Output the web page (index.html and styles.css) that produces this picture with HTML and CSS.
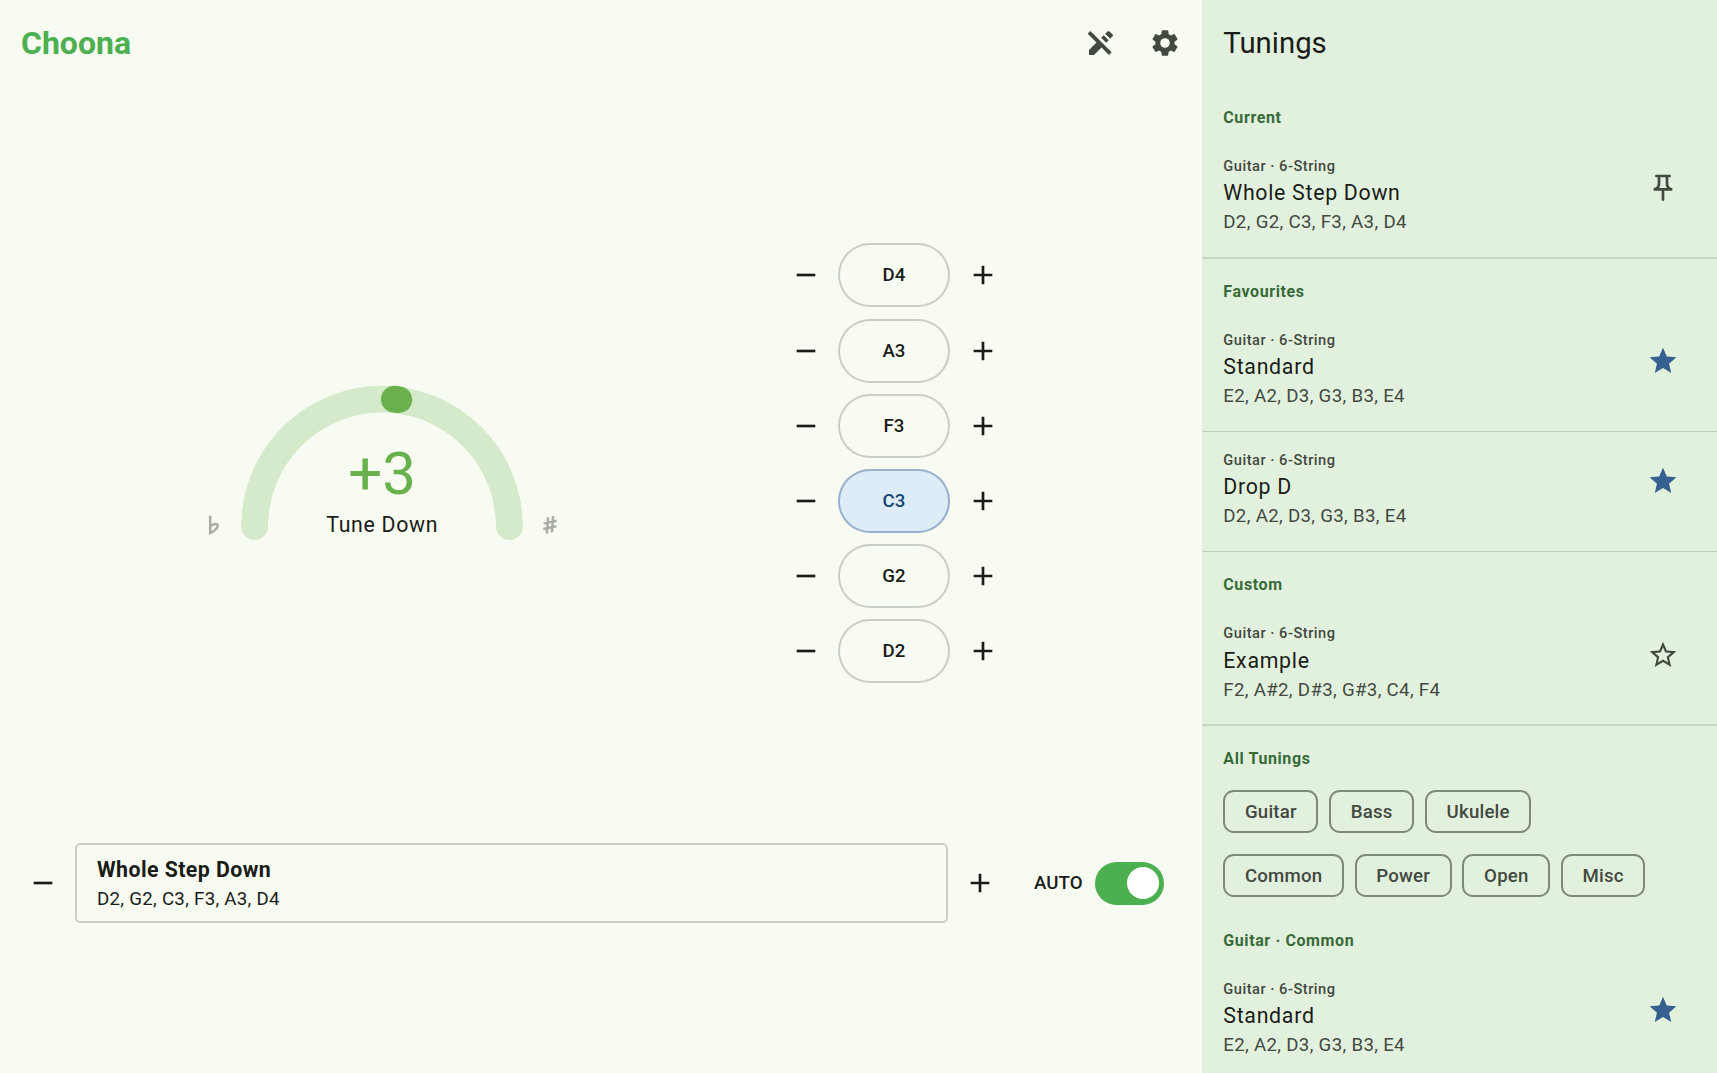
FILE: index.html
```html
<!DOCTYPE html>
<html lang="en">
<head>
<meta charset="utf-8">
<title>Choona</title>
<link rel="stylesheet" href="styles.css">
</head>
<body>
<svg class="defs" aria-hidden="true">
  <symbol id="minus" viewBox="0 0 24 24"><path d="M19 13H5v-2h14v2z"/></symbol>
  <symbol id="plus" viewBox="0 0 24 24"><path d="M19 13h-6v6h-2v-6H5v-2h6V5h2v6h6v2z"/></symbol>
  <symbol id="star" viewBox="0 0 24 24"><path d="M12 17.27 18.18 21l-1.64-7.03L22 9.24l-7.19-.61L12 2 9.19 8.63 2 9.24l5.46 4.73L5.82 21z"/></symbol>
  <symbol id="star-outline" viewBox="0 0 24 24"><path d="m22 9.24-7.19-.62L12 2 9.19 8.63 2 9.24l5.46 4.73L5.82 21 12 17.27 18.18 21l-1.63-7.03L22 9.24zM12 15.4l-3.76 2.27 1-4.28-3.32-2.88 4.38-.38L12 6.1l1.71 4.04 4.38.38-3.32 2.88 1 4.28L12 15.4z"/></symbol>
  <symbol id="pin" viewBox="0 0 24 24"><path d="M14 4v5c0 1.12.37 2.16 1 3H9c.65-.86 1-1.9 1-3V4h4m3-2H7c-.55 0-1 .45-1 1s.45 1 1 1h1v5c0 1.66-1.34 3-3 3v2h5.97v7l1 1 1-1v-7H19v-2c-1.66 0-3-1.34-3-3V4h1c.55 0 1-.45 1-1s-.45-1-1-1z"/></symbol>
</svg>
<div class="app">
  <main class="tuner">
    <header class="topbar">
      <h1 class="brand">Choona</h1>
      <button class="icon-button" aria-label="Edit"><svg class="icon" viewBox="0 0 24 24"><path d="m12.13 8.13 1.93-1.94 3.75 3.75-1.94 1.93zM20.71 5.63l-2.34-2.34a1 1 0 0 0-1.41 0l-1.83 1.83 3.75 3.75L20.71 7a1 1 0 0 0 0-1.37zM2 5l6.63 6.63L3 17.25V21h3.75l5.63-5.62L18 21l2-2L4 3 2 5z"/></svg></button>
      <button class="icon-button" aria-label="Settings"><svg class="icon" viewBox="0 0 24 24"><path d="M19.14 12.94c.04-.3.06-.61.06-.94 0-.32-.02-.64-.07-.94l2.03-1.58a.49.49 0 0 0 .12-.61l-1.92-3.32a.49.49 0 0 0-.59-.22l-2.39.96c-.5-.38-1.03-.7-1.62-.94l-.36-2.54a.48.48 0 0 0-.48-.41h-3.84a.47.47 0 0 0-.47.41l-.36 2.54c-.59.24-1.13.57-1.62.94l-2.39-.96a.48.48 0 0 0-.59.22L2.74 8.87c-.12.21-.08.47.12.61l2.03 1.58c-.05.3-.09.63-.09.94s.02.64.07.94l-2.03 1.58a.49.49 0 0 0-.12.61l1.92 3.32c.12.22.37.29.59.22l2.39-.96c.5.38 1.03.7 1.62.94l.36 2.54c.05.24.24.41.48.41h3.84c.24 0 .44-.17.47-.41l.36-2.54c.59-.24 1.13-.56 1.62-.94l2.39.96c.22.08.47 0 .59-.22l1.92-3.32a.47.47 0 0 0-.12-.61l-2.01-1.58zM12 15.6A3.6 3.6 0 1 1 12 8.4a3.6 3.6 0 0 1 0 7.2z"/></svg></button>
    </header>

    <section class="stage">
      <div class="gauge">
        <div class="accidental"><svg viewBox="0 0 14 20" aria-label="Flat"><path d="M3.2 .8V18C7 16.4 11 13.2 10.7 10.6 10.4 8.2 6.4 8.6 3.4 11.4"/></svg></div>
        <div class="dial">
          <svg class="dial-arc" viewBox="0 0 282 156">
            <path class="track" d="M13.6 141.6A127.4 127.4 0 0 1 268.4 141.6"/>
            <path class="marker" d="M153.3 14.2A127.4 127.4 0 0 1 157.8 14.7"/>
          </svg>
          <div class="reading">
            <span class="offset">+3</span>
            <span class="advice">Tune Down</span>
          </div>
        </div>
        <div class="accidental"><svg viewBox="0 0 14 20" aria-label="Sharp"><path d="M3.9 18.6 5.1 2.4M8.9 17.4 10.1 1.2M.6 8.6 13.6 5.8M.3 14 13.3 11.2"/></svg></div>
      </div>

      <div class="strings">
        <div class="string"><button class="step"><svg class="icon"><use href="#minus"/></svg></button><button class="note">D4</button><button class="step"><svg class="icon"><use href="#plus"/></svg></button></div>
        <div class="string"><button class="step"><svg class="icon"><use href="#minus"/></svg></button><button class="note">A3</button><button class="step"><svg class="icon"><use href="#plus"/></svg></button></div>
        <div class="string"><button class="step"><svg class="icon"><use href="#minus"/></svg></button><button class="note">F3</button><button class="step"><svg class="icon"><use href="#plus"/></svg></button></div>
        <div class="string"><button class="step"><svg class="icon"><use href="#minus"/></svg></button><button class="note note-selected">C3</button><button class="step"><svg class="icon"><use href="#plus"/></svg></button></div>
        <div class="string"><button class="step"><svg class="icon"><use href="#minus"/></svg></button><button class="note">G2</button><button class="step"><svg class="icon"><use href="#plus"/></svg></button></div>
        <div class="string"><button class="step"><svg class="icon"><use href="#minus"/></svg></button><button class="note">D2</button><button class="step"><svg class="icon"><use href="#plus"/></svg></button></div>
      </div>
    </section>

    <footer class="controls">
      <button class="step"><svg class="icon"><use href="#minus"/></svg></button>
      <div class="selector">
        <span class="selector-name">Whole Step Down</span>
        <span class="selector-notes">D2, G2, C3, F3, A3, D4</span>
      </div>
      <button class="step"><svg class="icon"><use href="#plus"/></svg></button>
      <span class="auto">AUTO</span>
      <div class="switch"><div class="thumb"></div></div>
    </footer>
  </main>

  <aside class="panel">
    <h2 class="panel-title">Tunings</h2>

    <h3 class="group">Current</h3>
    <div class="item item-end">
      <div class="item-text"><span class="kind">Guitar · 6-String</span><span class="name">Whole Step Down</span><span class="notes">D2, G2, C3, F3, A3, D4</span></div>
      <button class="icon-button"><svg class="icon"><use href="#pin"/></svg></button>
    </div>

    <h3 class="group">Favourites</h3>
    <div class="item">
      <div class="item-text"><span class="kind">Guitar · 6-String</span><span class="name">Standard</span><span class="notes">E2, A2, D3, G3, B3, E4</span></div>
      <button class="icon-button starred"><svg class="icon"><use href="#star"/></svg></button>
    </div>
    <div class="item">
      <div class="item-text"><span class="kind">Guitar · 6-String</span><span class="name">Drop D</span><span class="notes">D2, A2, D3, G3, B3, E4</span></div>
      <button class="icon-button starred"><svg class="icon"><use href="#star"/></svg></button>
    </div>

    <h3 class="group">Custom</h3>
    <div class="item item-end">
      <div class="item-text"><span class="kind">Guitar · 6-String</span><span class="name">Example</span><span class="notes">F2, A#2, D#3, G#3, C4, F4</span></div>
      <button class="icon-button"><svg class="icon"><use href="#star-outline"/></svg></button>
    </div>

    <h3 class="group">All Tunings</h3>
    <div class="chips"><button class="chip">Guitar</button><button class="chip">Bass</button><button class="chip">Ukulele</button></div>
    <div class="chips"><button class="chip">Common</button><button class="chip">Power</button><button class="chip">Open</button><button class="chip">Misc</button></div>

    <h3 class="group">Guitar · Common</h3>
    <div class="item">
      <div class="item-text"><span class="kind">Guitar · 6-String</span><span class="name">Standard</span><span class="notes">E2, A2, D3, G3, B3, E4</span></div>
      <button class="icon-button starred"><svg class="icon"><use href="#star"/></svg></button>
    </div>
  </aside>
</div>
</body>
</html>
```

FILE: styles.css
```css
* { box-sizing: border-box; }

body {
  margin: 0;
  font-family: Roboto, "Noto Sans", sans-serif;
  color: #1a1c18;
  background: #f8fbf2;
}

h1, h2, h3 { margin: 0; }

button {
  margin: 0;
  padding: 0;
  border: 0;
  background: none;
  color: inherit;
  font: inherit;
}

.defs { position: absolute; width: 0; height: 0; }

.app {
  display: grid;
  grid-template-columns: 1202px 1fr;
  height: 100vh;
  overflow: hidden;
}

.icon { display: block; width: 32px; height: 32px; fill: currentColor; }

.icon-button {
  display: grid;
  place-items: center;
  flex: none;
  width: 64px;
  height: 64px;
  color: #42493f;
}

.starred { color: #35608f; }

/* Tuner */
.tuner {
  display: grid;
  grid-template-rows: 86px 754.4px 86px 1fr;
  min-width: 0;
}

.topbar {
  display: flex;
  align-items: center;
  padding: 0 5.5px 0 21px;
}

.brand {
  flex: 1;
  font-size: 32px;
  line-height: 40px;
  font-weight: 700;
  color: #4caf50;
}

.stage {
  display: grid;
  grid-template-columns: 763px 1fr;
  align-items: center;
}

.gauge {
  display: flex;
  align-items: flex-end;
  justify-content: center;
  padding-bottom: 1.4px;
}

.accidental {
  display: grid;
  place-items: center;
  width: 54px;
  padding-bottom: 6px;
}

.accidental svg {
  width: 14px;
  height: 20px;
  fill: none;
  stroke: #a9aea5;
  stroke-width: 2.5;
}

.dial { display: grid; }
.dial > * { grid-area: 1 / 1; }
.dial-arc { width: 282px; height: 156px; fill: none; stroke-width: 26.8; stroke-linecap: round; }
.track { stroke: #d5eacb; }
.marker { stroke: #68b14c; }

.reading {
  display: flex;
  flex-direction: column;
  align-items: center;
  justify-content: flex-end;
  padding-left: 1.4px;
}

.offset { margin-bottom: 1px; font-size: 60px; line-height: 69px; color: #68b14c; }
.advice { font-size: 21.33px; line-height: 32px; letter-spacing: 0.67px; }

.strings {
  display: flex;
  flex-direction: column;
  gap: 11.1px;
  padding-left: 10.5px;
}

.string { display: flex; align-items: center; }
.step { display: grid; place-items: center; flex: none; width: 64px; height: 64px; }

.note {
  width: 112px;
  height: 64px;
  margin: 0 0.5px;
  border-radius: 32px;
  box-shadow: inset 0 0 0 2px #c9cfc4;
  font-size: 18.67px;
  font-weight: 500;
  text-align: center;
}

.note-selected {
  background: #deecf8;
  box-shadow: inset 0 0 0 2px #99b1cc;
  color: #124574;
}

.controls {
  display: flex;
  align-items: center;
  padding: 0 38px 0 11px;
}

.selector {
  display: flex;
  flex-direction: column;
  justify-content: center;
  flex: 1;
  height: 80px;
  padding: 0 22px;
  border-radius: 5.3px;
  box-shadow: inset 0 0 0 2px #c9cfc4;
}

.selector-name { font-size: 21.33px; line-height: 32px; font-weight: 700; letter-spacing: 0.42px; }
.selector-notes { font-size: 18.67px; line-height: 26.67px; letter-spacing: 0.3px; }

.auto { margin: 0 12px 0 22px; font-size: 18.67px; font-weight: 500; }

.switch {
  display: flex;
  align-items: center;
  justify-content: flex-end;
  width: 69.5px;
  height: 42.7px;
  padding: 0 5.3px;
  border-radius: 22px;
  background: #4caf50;
}

.thumb { width: 32px; height: 32px; border-radius: 50%; background: #fff; }

/* Tunings panel */
.panel { background: #e2f1de; overflow: hidden; }

.panel-title {
  height: 84.9px;
  padding-left: 21.3px;
  font-size: 29.33px;
  line-height: 87px;
  font-weight: 400;
}

.group {
  height: 53.7px;
  padding: 22px 21.3px 0;
  font-size: 16px;
  line-height: 21.3px;
  font-weight: 700;
  letter-spacing: 0.6px;
  color: #386a38;
}

.item {
  display: flex;
  align-items: flex-start;
  height: 120px;
  padding: 17px 22px 0 21.3px;
  border-bottom: 1px solid #bccdb8;
}

.item-end { border-bottom: 2px solid #c7d6c3; }

.item-text { display: flex; flex-direction: column; flex: 1; padding-top: 0.3px; }
.kind { font-size: 14.67px; line-height: 21.3px; font-weight: 500; letter-spacing: 0.5px; color: #42493f; }
.name { font-size: 21.33px; line-height: 32px; letter-spacing: 0.7px; }
.notes { font-size: 18.67px; line-height: 27px; letter-spacing: 0.33px; color: #42493f; }

.chips {
  display: flex;
  align-items: center;
  gap: 10.67px;
  height: 64px;
  padding-left: 21.3px;
}

.chip {
  height: 42.67px;
  padding: 0 21.7px;
  border-radius: 10.67px;
  box-shadow: inset 0 0 0 2px #808a7c;
  font-size: 18.67px;
  font-weight: 500;
  letter-spacing: 0.18px;
  color: #42493f;
}
```
